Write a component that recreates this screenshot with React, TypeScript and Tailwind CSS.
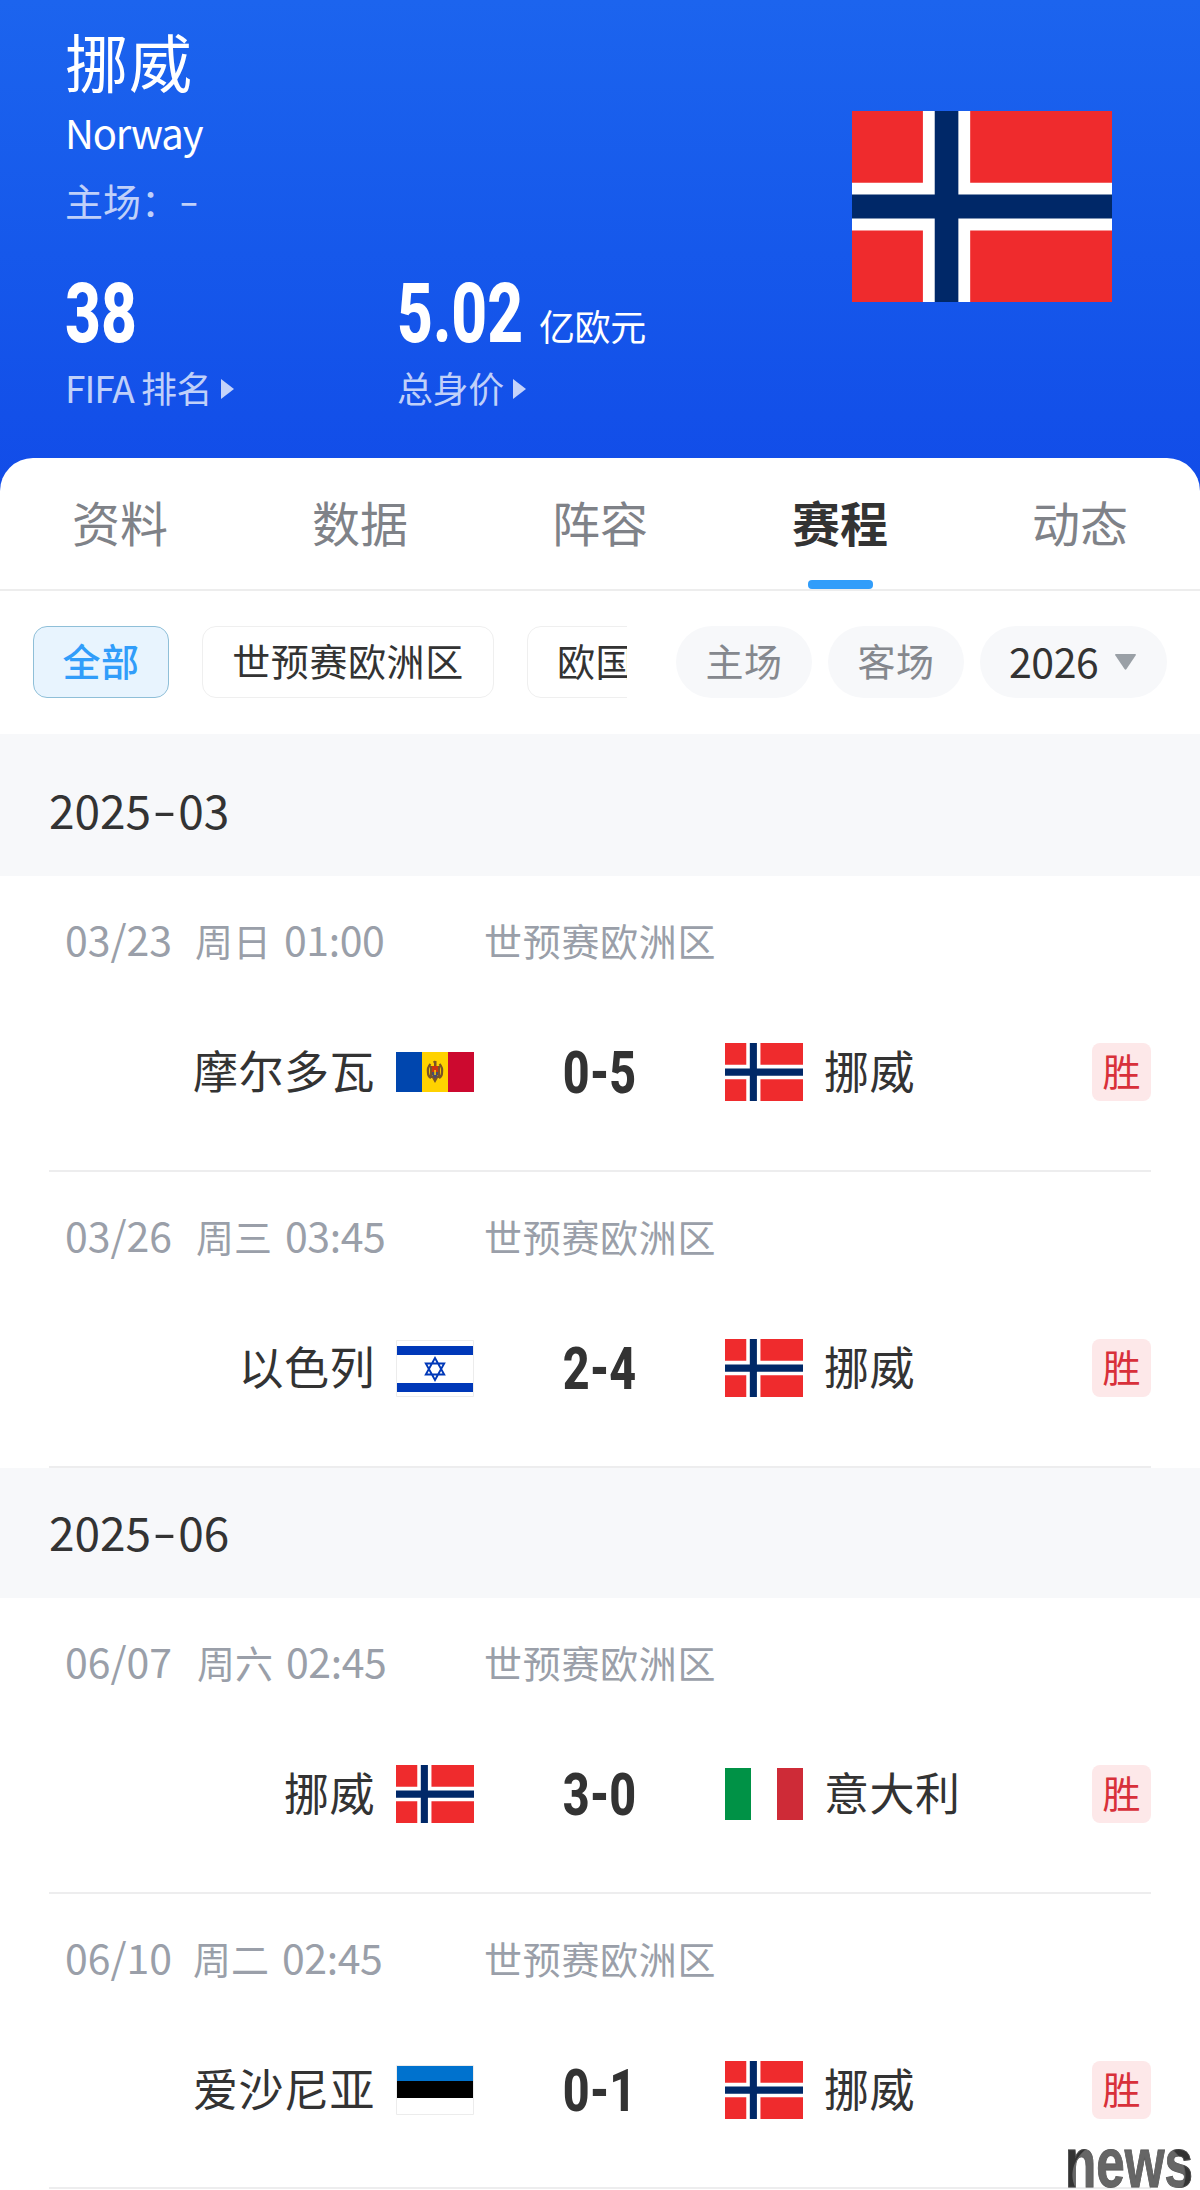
import type { ReactNode } from "react";
import clsx from "clsx";

type Country = "norway" | "moldova" | "israel" | "italy" | "estonia";

type Match = {
  date: string;
  dateWidth: string;
  day: string;
  time: string;
  home: string;
  homeFlag: Country;
  away: string;
  awayFlag: Country;
  score: string;
};

const tabs = ["资料", "数据", "阵容", "赛程", "动态"];

const months: { year: string; month: string; matches: Match[] }[] = [
  {
    year: "2025",
    month: "03",
    matches: [
      { date: "03/23", dateWidth: "w-[130px]", day: "周日", time: "01:00", home: "摩尔多瓦", homeFlag: "moldova", away: "挪威", awayFlag: "norway", score: "0-5" },
      { date: "03/26", dateWidth: "w-[131px]", day: "周三", time: "03:45", home: "以色列", homeFlag: "israel", away: "挪威", awayFlag: "norway", score: "2-4" },
    ],
  },
  {
    year: "2025",
    month: "06",
    matches: [
      { date: "06/07", dateWidth: "w-[132px]", day: "周六", time: "02:45", home: "挪威", homeFlag: "norway", away: "意大利", awayFlag: "italy", score: "3-0" },
      { date: "06/10", dateWidth: "w-[128px]", day: "周二", time: "02:45", home: "爱沙尼亚", homeFlag: "estonia", away: "挪威", awayFlag: "norway", score: "0-1" },
    ],
  },
];

function NorwayFlag({ className }: { className: string }) {
  return (
    <svg className={className} viewBox="0 0 22 16" preserveAspectRatio="none">
      <path fill="#ef2b2d" d="M0 0h22v16H0z" />
      <path fill="#fff" d="M6 0h4v16H6zM0 6h22v4H0z" />
      <path fill="#002868" d="M7 0h2v16H7zM0 7h22v2H0z" />
    </svg>
  );
}

function Flag({ country }: { country: Country }) {
  switch (country) {
    case "norway":
      return <NorwayFlag className="h-[58px] w-[78px] shrink-0" />;
    case "moldova":
      return (
        <svg className="h-[40px] w-[78px] shrink-0" viewBox="0 0 78 40">
          <path fill="#0046ae" d="M0 0h26v40H0z" />
          <path fill="#ffd200" d="M26 0h26v40H26z" />
          <path fill="#cc092f" d="M52 0h26v40H52z" />
          <path
            fill="none"
            stroke="#7a5326"
            strokeWidth="2.2"
            d="M37.500 10.500l2-1M34.500 12c-3 3-3 6-2.500 9 0 2 1 4 3 5M43.500 12c3 3 3 6 2.500 9 0 2-1 4-3 5M35 14v12M43 14v12"
          />
          <path fill="#7a5326" d="M35 24l4 7 4-7zM38 9h2.500v5H38z" />
          <path fill="#cc3311" d="M36 14h6v6h-6z" />
          <path fill="#4a4a6c" d="M36 20h6v3l-3 4-3-4z" />
          <path fill="#ffd200" d="M38.300 18h1.500v5h-1.500z" />
        </svg>
      );
    case "israel":
      return (
        <svg className="h-[57px] w-[78px] shrink-0" viewBox="0 0 78 57">
          <path fill="#fff" stroke="#ececec" d="M.5.5h77v56H.500z" />
          <path fill="#0038b8" d="M1 6h76v9H1zM1 43h76v9H1z" />
          <path
            fill="none"
            stroke="#0038b8"
            strokeWidth="1.900"
            d="M39 18l9.200 16.500H29.800zM39 40l9.200-16.500H29.800z"
          />
        </svg>
      );
    case "italy":
      return (
        <svg className="h-[52px] w-[78px] shrink-0" viewBox="0 0 78 52">
          <path fill="#fff" d="M0 0h78v52H0z" />
          <path fill="#009246" d="M0 0h26v52H0z" />
          <path fill="#ce2b37" d="M52 0h26v52H52z" />
        </svg>
      );
    case "estonia":
      return (
        <svg className="h-[50px] w-[78px] shrink-0" viewBox="0 0 78 50">
          <path fill="#fff" stroke="#ececec" d="M.5.5h77v49H.500z" />
          <path fill="#0072ce" d="M1 1h76v16H1z" />
          <path fill="#000" d="M1 16h76v17H1z" />
        </svg>
      );
  }
}

function Stat({ value, unit, children, width }: { value: string; unit?: string; children: ReactNode; width: string }) {
  return (
    <div className="w-[332px]">
      <div className="flex h-[83px] items-end">
        <div className={clsx("font-[Roboto] text-[83px] leading-none font-extrabold", width)}>
          <span className="inline-block origin-left scale-x-[0.75]">{value}</span>
        </div>
        {unit && (
          <span className="mb-[12px] text-[36px] leading-none tracking-[-0.4px] whitespace-nowrap">{unit}</span>
        )}
      </div>
      <div className="mt-[14px] flex h-[36px] items-baseline text-[36px] leading-none tracking-[-0.4px] text-[#c0d0f9]">
        {children}
        <svg className="mt-[3px] ml-[9px] h-[20px] w-[13px] self-center" viewBox="0 0 13 20">
          <path fill="#c5d3fa" d="M0 0l13 10L0 20z" />
        </svg>
      </div>
    </div>
  );
}

function Header() {
  return (
    <header className="flex h-[491px] justify-between bg-linear-to-b from-[#1c64ee] to-[#124ce8] pr-[88px] pl-[65px] text-white">
      <div className="pt-[28px]">
        <h1 className="text-[63px] leading-[64px] tracking-[1px]">挪威</h1>
        <p className="mt-[20px] text-[40px] leading-none tracking-[-1.2px]">Norway</p>
        <p className="mt-[29px] text-[38px] leading-none text-[#c0d0f9]">
          主场：<span className="inline-block origin-left -translate-y-px scale-x-[1.5]">-</span>
        </p>
        <div className="mt-[53px] flex">
          <Stat value="38" width="w-[90px]">
            <span className="w-[76px] text-[37px] tracking-[-1px]">FIFA</span>排名
          </Stat>
          <Stat value="5.02" unit="亿欧元" width="w-[142px]">
            总身价
          </Stat>
        </div>
      </div>
      <NorwayFlag className="mt-[111px] h-[191px] w-[260px]" />
    </header>
  );
}

function Tabs() {
  return (
    <nav className="grid h-[133px] grid-cols-5 border-b-2 border-[#ededed]">
      {tabs.map((tab) => (
        <div
          key={tab}
          className={clsx(
            "flex flex-col items-center pt-[39px] text-[48px] leading-none",
            tab === "赛程" ? "font-bold text-[#333333]" : "text-[#7f8288]",
          )}
        >
          {tab}
          {tab === "赛程" && <span className="mt-auto h-[9px] w-[65px] rounded-[4px] bg-[#319dfa]" />}
        </div>
      ))}
    </nav>
  );
}

function Filters() {
  return (
    <div className="flex h-[143px] items-start pt-[35px] pl-[33px] text-[38px] leading-none tracking-[0.6px] whitespace-nowrap">
      <div className="flex w-[594px] gap-[33px] overflow-hidden">
        <span className="flex h-[72px] w-[136px] shrink-0 items-center justify-center rounded-[14px] border border-[#8fbfd8] bg-[#e8f4fe] pb-1 font-medium text-[#319dfa]">
          全部
        </span>
        <span className="flex h-[72px] w-[292px] shrink-0 items-center justify-center rounded-[14px] border border-[#efefef] pb-1 text-[#333333]">
          世预赛欧洲区
        </span>
        <span className="flex h-[72px] w-[180px] shrink-0 items-center rounded-[14px] border border-[#efefef] pb-1 pl-[29px] text-[#333333]">
          欧国
        </span>
      </div>
      <div className="ml-[49px] flex gap-4">
        <span className="flex h-[72px] w-[136px] items-center justify-center rounded-full bg-[#f7f8fa] pb-1 text-[#85888e]">
          主场
        </span>
        <span className="flex h-[72px] w-[136px] items-center justify-center rounded-full bg-[#f7f8fa] pb-1 text-[#85888e]">
          客场
        </span>
        <span className="flex h-[72px] w-[187px] items-center rounded-full bg-[#f7f8fa] pl-[29px] text-[#333333]">
          <span className="pb-[4px] text-[41px] tracking-[-0.4px]">2026</span>
          <svg className="ml-[17px] h-[16px] w-[21px]" viewBox="0 0 21 16">
            <path fill="#9aa0a6" d="M1 0h19q1.500 0 .6 1.500L11.500 15q-1 1.300-2 0L.4 1.500Q-.5 0 1 0z" />
          </svg>
        </span>
      </div>
    </div>
  );
}

function MatchRow({ match, last }: { match: Match; last: boolean }) {
  return (
    <article
      className={clsx("mx-[49px] border-b-2 border-[#ededee] pt-[42px]", last ? "h-[295px]" : "h-[296px]")}
    >
      <div className="flex h-[39px] items-baseline pl-4 text-[38px] leading-none whitespace-nowrap text-[#9a9fa9]">
        <div className="flex w-[419px] items-baseline">
          <span className={clsx("text-[41px]", match.dateWidth)}>{match.date}</span>
          <span className="w-[89px]">{match.day}</span>
          <span className="text-[41px] tracking-[-0.4px]">{match.time}</span>
        </div>
        <span className="tracking-[0.7px]">世预赛欧洲区</span>
      </div>
      <div className="mt-[86px] flex h-[58px] items-center text-[45px] leading-none whitespace-nowrap text-[#333333]">
        <div className="flex w-[425px] items-center justify-end gap-[21px]">
          <span className="pb-[5px] tracking-[0.5px]">{match.home}</span>
          <Flag country={match.homeFlag} />
        </div>
        <div className="flex w-[251px] justify-center font-[Roboto] text-[59px] font-extrabold">
          <span className="scale-x-[0.79]">{match.score}</span>
        </div>
        <div className="flex items-center gap-[21px]">
          <Flag country={match.awayFlag} />
          <span className="pb-[5px] tracking-[0.5px]">{match.away}</span>
        </div>
        <span className="ml-auto flex h-[58px] w-[59px] items-center justify-center rounded-[8px] bg-[#fde8e9] pb-1 text-[38px] text-[#d8303a]">
          胜
        </span>
      </div>
    </article>
  );
}

export default function App() {
  return (
    <div className="relative h-[2190px] w-[1200px] overflow-hidden bg-white font-['Noto_Sans_CJK_SC',sans-serif]">
      <Header />
      <main className="-mt-[33px] rounded-t-[33px] bg-white">
        <Tabs />
        <Filters />
        {months.map((group, groupIndex) => (
          <section key={group.month}>
            <h2
              className={clsx(
                "flex items-center bg-[#f7f8fa] pl-[49px] text-[46px] leading-none text-[#333333]",
                groupIndex === 0 ? "h-[142px] pt-[8px]" : "h-[130px] pb-[4px]",
              )}
            >
              {group.year}
              <span className="w-[27px] -translate-y-[2px] scale-x-[1.5] text-center">-</span>
              {group.month}
            </h2>
            {group.matches.map((match, i) => (
              <MatchRow key={match.date} match={match} last={groupIndex === 1 && i === 1} />
            ))}
          </section>
        ))}
      </main>
      <div className="absolute top-[2130px] left-[1065px] h-[60px] origin-left scale-x-[0.73] bg-[radial-gradient(ellipse_at_50%_75%,#666666_0_62%,#333333_63%)] bg-clip-text font-['Liberation_Sans',sans-serif] text-[70px] leading-[66px] font-bold text-transparent [-webkit-text-stroke:1px_#55555580]">
        news
      </div>
    </div>
  );
}
